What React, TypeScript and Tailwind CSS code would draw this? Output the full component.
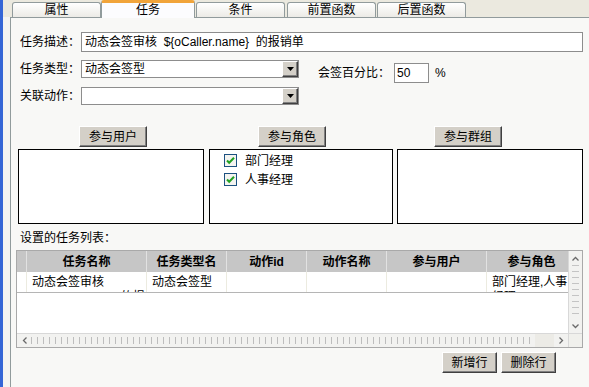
import React from "react";

const btn =
  "flex items-center justify-center border border-t-white border-l-white border-r-[#404040] border-b-[#404040] bg-[#d4d0c8] shadow-[inset_-1px_-1px_#808080] text-[12px] leading-none";

function Tab({ label, active }: { label: string; active?: boolean }) {
  if (active) {
    return (
      <div className="relative z-10 -mb-px flex h-[18px] w-[94px] items-center justify-center rounded-t-[3px] border-x border-t-[3px] border-x-[#919b9c] border-t-[#f1a43a] bg-[#fcfcfe] pb-[2px] text-[12px]">
        {label}
      </div>
    );
  }
  return (
    <div className="flex h-[15px] w-[89px] items-center justify-center rounded-t-[3px] border border-b-0 border-[#919b9c] bg-gradient-to-b from-white to-[#ecebe6] text-[12px] leading-none">
      {label}
    </div>
  );
}

function Select({ value }: { value?: string }) {
  return (
    <div className="flex h-[18px] w-[218px] items-center border border-[#8d8d8d] bg-white">
      <div className="flex-1 pl-[3px] text-[12px] leading-none">{value}</div>
      <div className={btn + " h-[16px] w-[16px]"}>
        <svg width="7" height="4" viewBox="0 0 7 4">
          <path d="M0 0h7L3.5 4z" fill="#000" />
        </svg>
      </div>
    </div>
  );
}

function Check({ label }: { label: string }) {
  return (
    <div className="flex h-[19px] items-center">
      <svg width="13" height="13" viewBox="0 0 13 13" className="ml-[14px]">
        <rect x="0.5" y="0.5" width="12" height="12" fill="#f4f4f0" stroke="#1c5180" />
        <path d="M3 6.5l2.2 2.3L10 3.8" fill="none" stroke="#21a121" strokeWidth="2" />
      </svg>
      <span className="ml-[8px] text-[12px]">{label}</span>
    </div>
  );
}

const cols = [
  { w: "w-[120px]", h: "任务名称", v: "动态会签审核  ${oCaller.name} 的报销单" },
  { w: "w-[80px]", h: "任务类型名", v: "动态会签型" },
  { w: "w-[80px]", h: "动作id", v: "" },
  { w: "w-[80px]", h: "动作名称", v: "" },
  { w: "w-[100px]", h: "参与用户", v: "" },
  { w: "w-[90px]", h: "参与角色", v: "部门经理,人事经理" },
];

export default function App() {
  return (
    <div className="flex h-[387px] w-[589px] overflow-hidden bg-[#f4f4f2] font-['Liberation_Sans','Noto_Sans_CJK_SC',sans-serif] text-[12px] text-black">
      <div className="w-[3px] bg-[#3566d6]" />
      <div className="flex flex-1 flex-col">
        <div className="flex h-[17px] items-end bg-[#ebe9df] pl-[9px]">
          <Tab label="属性" />
          <Tab label="任务" active />
          <div className="ml-[1px]">
            <Tab label="条件" />
          </div>
          <div className="ml-[2px]">
            <Tab label="前置函数" />
          </div>
          <div className="ml-[1px]">
            <Tab label="后置函数" />
          </div>
        </div>
        <div className="ml-[7px] flex flex-1 flex-col border-l border-t border-[#919b9c] bg-[#f8f8f6]">
          {/* row 1 */}
          <div className="mt-[14px] flex h-[20px] items-center">
            <div className="ml-[9px] w-[61px]">任务描述：</div>
            <div className="flex h-[20px] w-[502px] items-center border border-[#8d8d8d] bg-white pl-[3px]">
              动态会签审核&nbsp;&nbsp;${"{oCaller.name}"}&nbsp;&nbsp;的报销单
            </div>
          </div>
          {/* row 2 */}
          <div className="mt-[8px] flex items-start">
            <div className="ml-[9px] w-[61px] leading-[18px]">任务类型：</div>
            <Select value="动态会签型" />
            <div className="ml-[19px] mt-[3px] flex h-[20px] items-center">
              <span>会签百分比：</span>
              <div className="ml-[4px] flex h-[20px] w-[35px] items-center border border-[#8d8d8d] bg-white pl-[2px]">50</div>
              <span className="ml-[6px]">%</span>
            </div>
          </div>
          {/* row 3 */}
          <div className="mt-[4px] flex items-start">
            <div className="ml-[9px] w-[61px] leading-[18px]">关联动作：</div>
            <Select />
          </div>
          {/* participant buttons */}
          <div className="mt-[21px] flex">
            <div className={btn + " ml-[68px] h-[21px] w-[68px]"}>参与用户</div>
            <div className={btn + " ml-[111px] h-[21px] w-[68px]"}>参与角色</div>
            <div className={btn + " ml-[108px] h-[21px] w-[68px]"}>参与群组</div>
          </div>
          <div className="mt-[2px] flex">
            <div className="ml-[7px] h-[75px] w-[186px] border border-black bg-white" />
            <div className="ml-[5px] h-[75px] w-[184px] border border-black bg-white pt-[1px]">
              <Check label="部门经理" />
              <Check label="人事经理" />
            </div>
            <div className="ml-[4px] h-[75px] w-[186px] border border-black bg-white" />
          </div>
          <div className="ml-[9px] mt-[6px] h-[16px] leading-[16px]">设置的任务列表：</div>
          {/* grid */}
          <div className="ml-[5px] mt-[4px] flex h-[98px] w-[567px] flex-col border border-[#a9a9a9] bg-white">
            <div className="flex h-[82px]">
              <div className="flex-1 overflow-hidden">
                <div className="flex h-[21px] bg-[#c6c6c6] font-bold">
                  <div className="w-[10px] shrink-0 border-r border-[#e2e2e2]" />
                  {cols.map((c) => (
                    <div
                      key={c.h}
                      className={c.w + " flex shrink-0 items-center justify-center border-r border-[#e2e2e2] leading-none"}
                    >
                      {c.h}
                    </div>
                  ))}
                </div>
                <div className="flex h-[21px] border-b border-[#b5b5b5]">
                  <div className="w-[10px] shrink-0 border-r border-[#ecebe0]" />
                  {cols.map((c) => (
                    <div
                      key={c.h}
                      className={c.w + " shrink-0 overflow-hidden border-r border-[#ecebe0] pl-[5px] pt-[3px] leading-[15px]"}
                    >
                      {c.v}
                    </div>
                  ))}
                </div>
              </div>
              <div className="flex w-[14px] flex-col border-l border-[#d8d8d8] bg-[#f2f2f0]">
                <div className="flex h-[14px] items-center justify-center">
                  <svg width="7" height="5" viewBox="0 0 7 5">
                    <path d="M0.5 4.5L3.5 1.5L6.5 4.5" fill="none" stroke="#6a6a6a" strokeWidth="1.3" />
                  </svg>
                </div>
                <div className="mx-[3px] flex-1 bg-[repeating-linear-gradient(180deg,#c4c4c4_0_1px,transparent_1px_6px)]" />
                <div className="flex h-[14px] items-center justify-center">
                  <svg width="7" height="5" viewBox="0 0 7 5">
                    <path d="M0.5 0.5L3.5 3.5L6.5 0.5" fill="none" stroke="#6a6a6a" strokeWidth="1.3" />
                  </svg>
                </div>
              </div>
            </div>
            <div className="flex h-[14px] border-t border-[#d8d8d8] bg-[#f2f2f0]">
              <div className="flex w-[14px] items-center justify-center">
                <svg width="5" height="7" viewBox="0 0 5 7">
                  <path d="M4.5 0.5L1.5 3.5L4.5 6.5" fill="none" stroke="#6a6a6a" strokeWidth="1.3" />
                </svg>
              </div>
              <div className="my-[3px] w-[504px] bg-[repeating-linear-gradient(90deg,#bdbdbd_0_1px,transparent_1px_6px)]" />
              <div className="flex-1 bg-[#ecebe6]" />
              <div className="flex w-[14px] items-center justify-center">
                <svg width="5" height="7" viewBox="0 0 5 7">
                  <path d="M0.5 0.5L3.5 3.5L0.5 6.5" fill="none" stroke="#6a6a6a" strokeWidth="1.3" />
                </svg>
              </div>
              <div className="w-[14px] border-l border-[#d8d8d8] bg-[#f0f0ec]" />
            </div>
          </div>
          <div className="mt-[4px] flex">
            <div className={btn + " ml-[431px] h-[21px] w-[55px]"}>新增行</div>
            <div className={btn + " ml-[4px] h-[21px] w-[55px]"}>删除行</div>
          </div>
        </div>
      </div>
    </div>
  );
}
